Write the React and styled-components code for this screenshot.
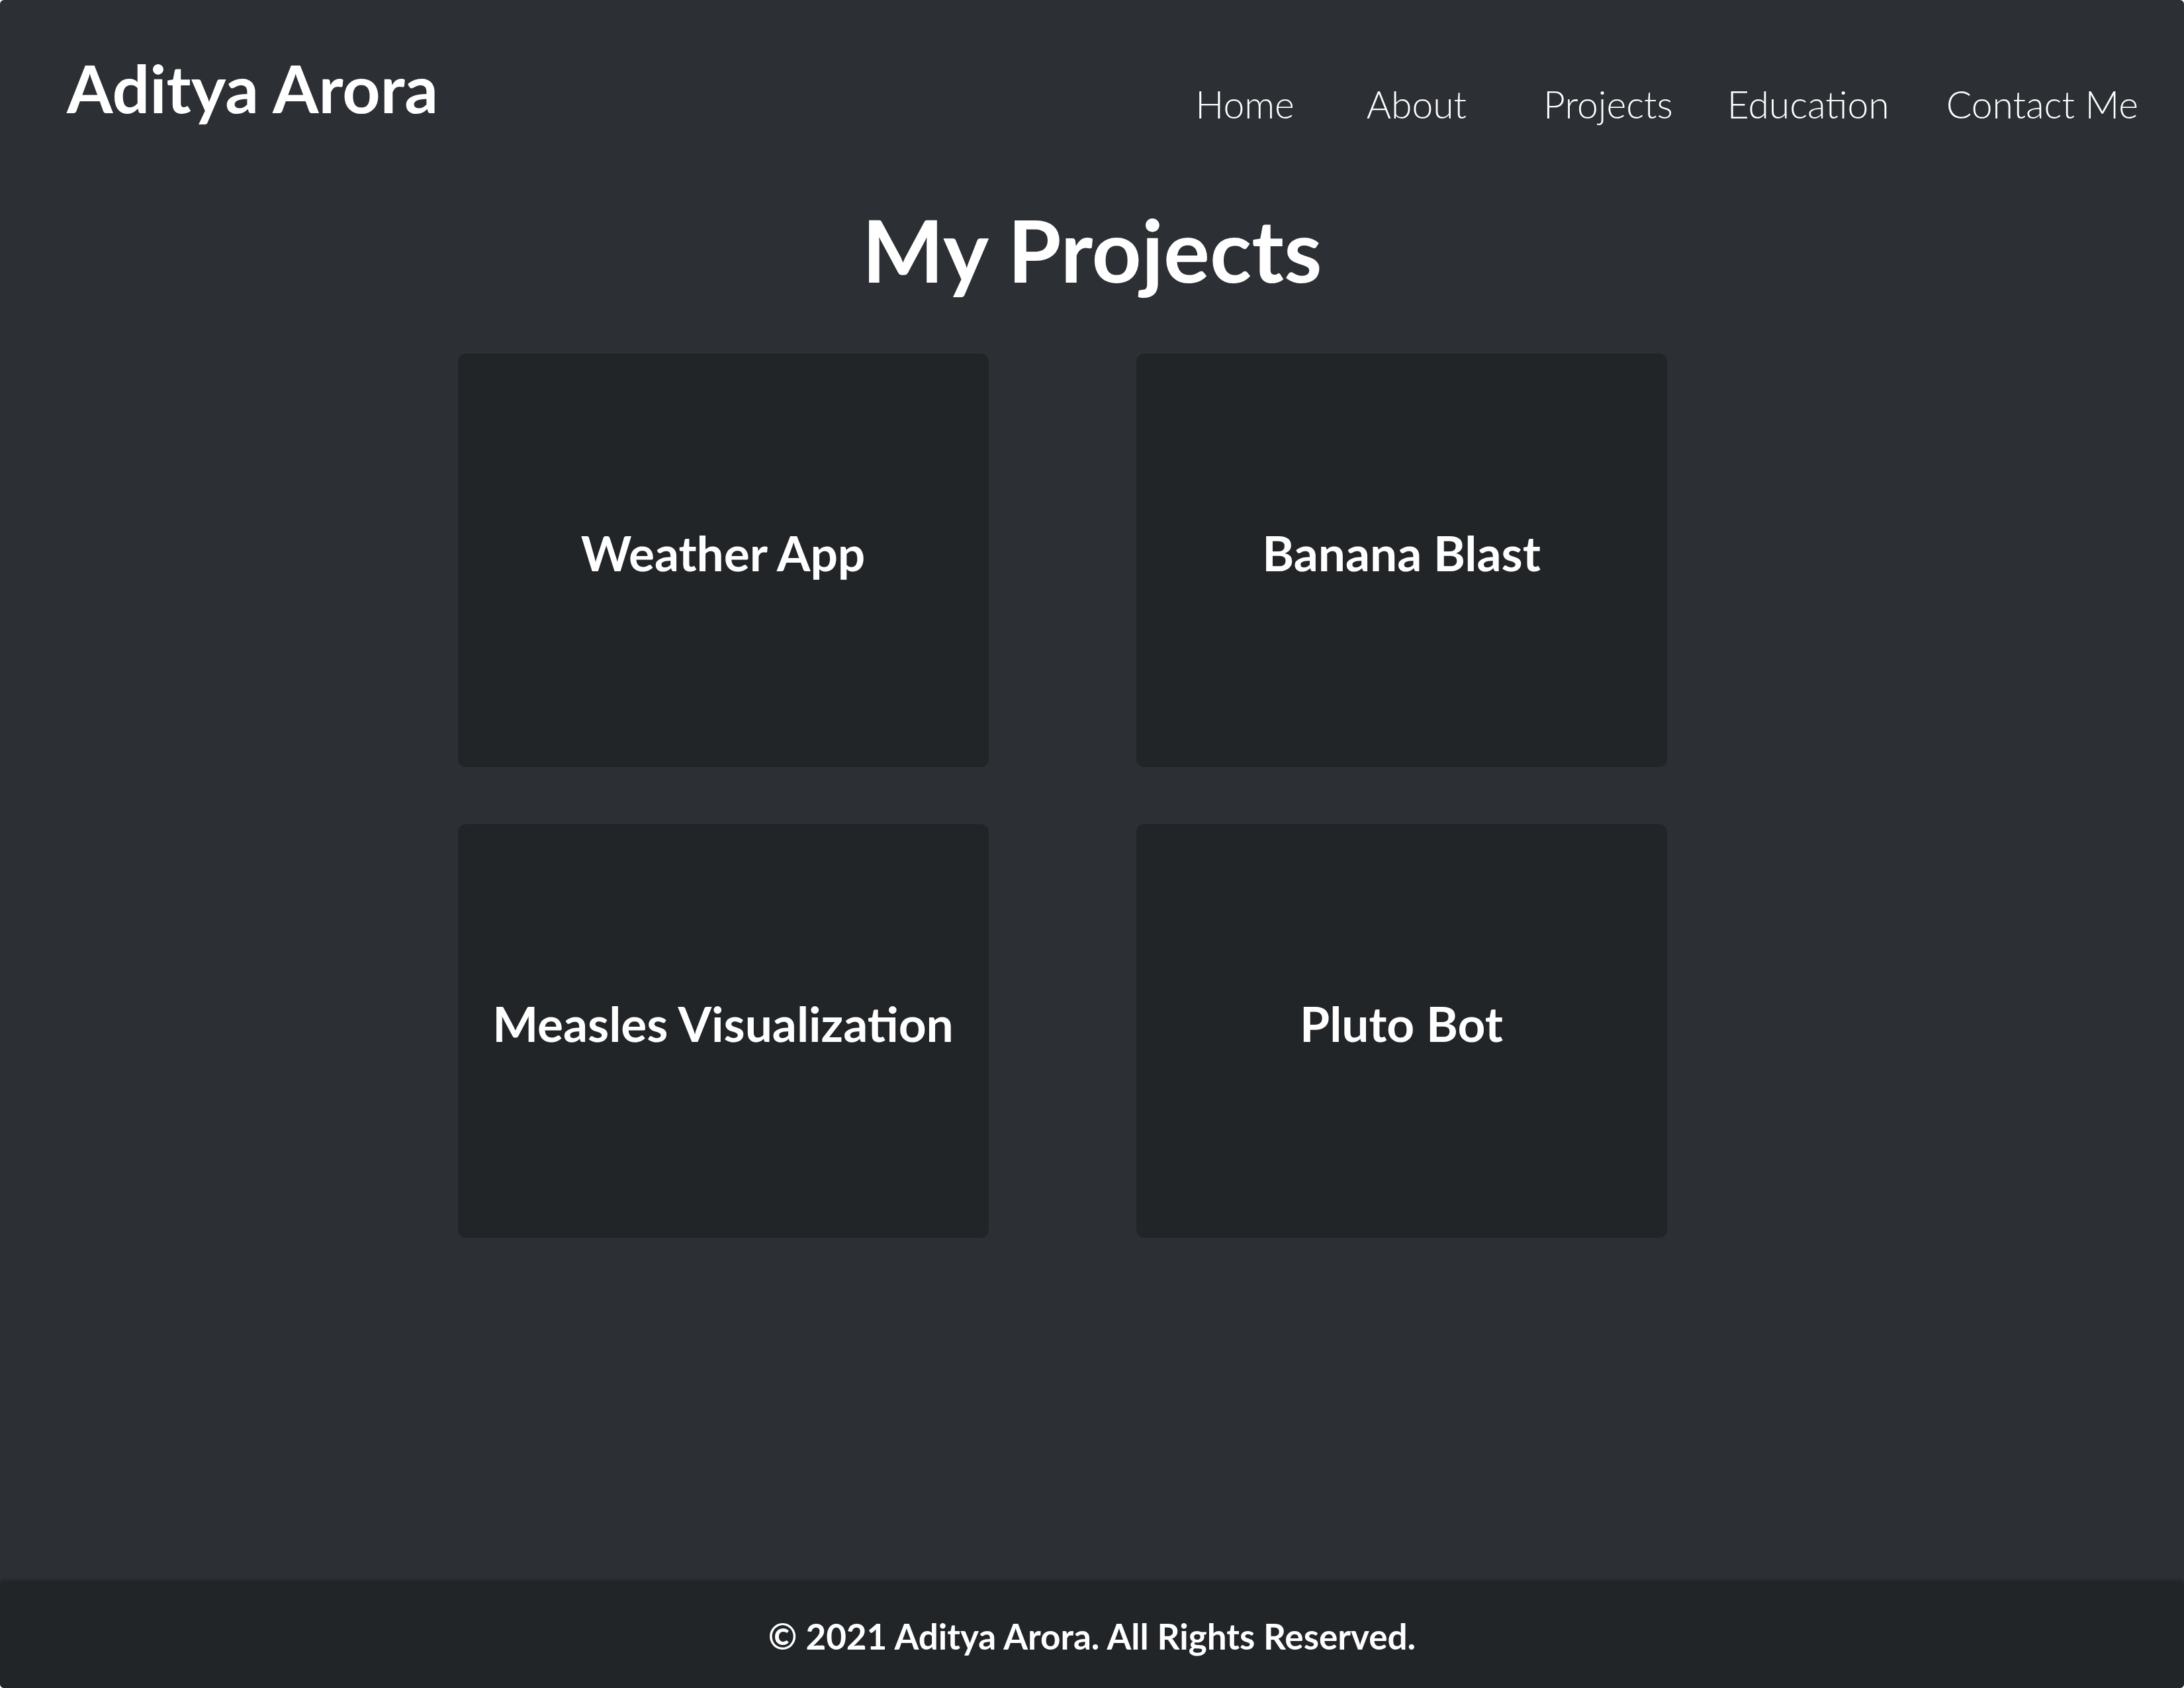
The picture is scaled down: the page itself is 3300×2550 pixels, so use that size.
import React from "react";
import styled, { createGlobalStyle } from "styled-components";

const GlobalStyle = createGlobalStyle`
  html, body {
    margin: 0;
    padding: 0;
    background: #ffffff;
  }
  body {
    font-family: "Lato", "DejaVu Sans", sans-serif;
    color: #ffffff;
  }
`;

const Page = styled.div`
  min-height: 100vh;
  display: flex;
  flex-direction: column;
  background-color: #2c2f34;
  border-radius: 6px;
  overflow: hidden;
`;

const Header = styled.header`
  display: flex;
  justify-content: space-between;
  align-items: baseline;
  padding: 72px 69px 0 101px;
`;

const Brand = styled.h1`
  margin: 0;
  font-size: 100px;
  font-weight: 700;
  line-height: 1.2;
`;

const Nav = styled.nav`
  display: flex;
  align-items: baseline;
  transform: translateY(8px);
`;

const NavLink = styled.a`
  font-size: 57px;
  font-weight: 300;
  color: #ffffff;
  text-decoration: none;
  margin-left: ${(p) => p.gap}px;
`;

const Main = styled.main`
  flex: 1;
  display: flex;
  flex-direction: column;
  align-items: center;
`;

const Title = styled.h2`
  margin: 106px 0 79px;
  font-size: 131px;
  font-weight: 700;
  line-height: 1.2;
`;

const Grid = styled.div`
  display: grid;
  grid-template-columns: 802px 802px;
  column-gap: 223px;
  row-gap: 86px;
  margin-right: 90px;
`;

const Card = styled.div`
  height: 625px;
  background-color: #222528;
  border-radius: 12px;
  display: flex;
  align-items: center;
  justify-content: center;
  padding-bottom: 24px;
  box-sizing: border-box;
`;

const CardTitle = styled.h3`
  margin: 0;
  font-size: 73px;
  font-weight: 700;
`;

const Footer = styled.footer`
  height: 161px;
  background-color: #222528;
  border-radius: 6px;
  box-shadow: 0 -2px 4px rgba(0, 0, 0, 0.25);
  display: flex;
  align-items: center;
  justify-content: center;
  font-size: 53px;
  font-weight: 700;
  padding-top: 4px;
  box-sizing: border-box;
`;

const links = [
  { label: "Home", gap: 0 },
  { label: "About", gap: 109 },
  { label: "Projects", gap: 116 },
  { label: "Education", gap: 82 },
  { label: "Contact Me", gap: 86 },
];

const projects = ["Weather App", "Banana Blast", "Measles Visualization", "Pluto Bot"];

export default function App() {
  return (
    <>
      <GlobalStyle />
      <Page>
        <Header>
          <Brand>Aditya Arora</Brand>
          <Nav>
            {links.map((l) => (
              <NavLink key={l.label} href="#" gap={l.gap}>
                {l.label}
              </NavLink>
            ))}
          </Nav>
        </Header>
        <Main>
          <Title>My Projects</Title>
          <Grid>
            {projects.map((p) => (
              <Card key={p}>
                <CardTitle>{p}</CardTitle>
              </Card>
            ))}
          </Grid>
        </Main>
        <Footer>© 2021 Aditya Arora. All Rights Reserved.</Footer>
      </Page>
    </>
  );
}
